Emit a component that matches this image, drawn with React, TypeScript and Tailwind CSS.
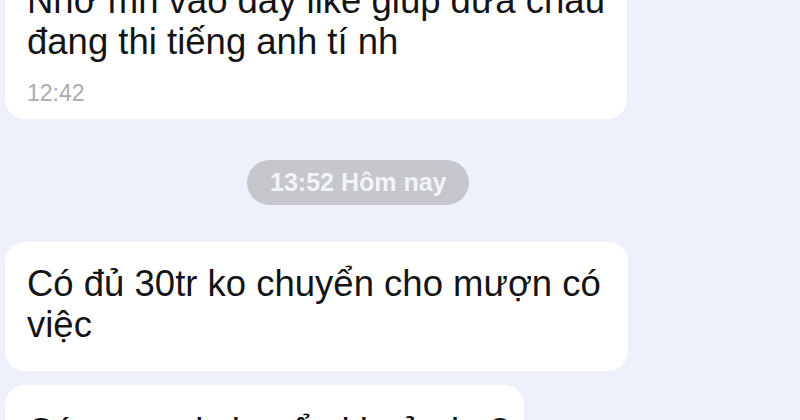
export default function App() {
  const font = { fontFamily: '"Liberation Sans", Arial, sans-serif' };

  return (
    <div
      className="w-[800px] h-[420px] overflow-hidden bg-[#eef0fb] text-[#141416]"
      style={font}
    >
      <div className="flex flex-col items-start -mt-[41px] pl-[5px]">
        {/* tin nhắn trước */}
        <div className="w-[622px] bg-white rounded-[20px] pl-[22px] pr-[6px] pt-[21px] pb-[14px]">
          <p className="text-[36.5px] leading-[41px]">
            Nhờ mn vào đây like giúp đứa cháu đang thi tiếng anh tí nh
          </p>
          <p className="mt-[19px] text-[23px] leading-[24px] text-[#a9acb4]">12:42</p>
        </div>

        {/* mốc thời gian */}
        <div className="ml-[242px] mt-[41px] h-[45px] px-[23px] rounded-full bg-[#c5c7cd] flex items-center">
          <span className="text-[25px] font-bold text-[#f3f4f7]">13:52 Hôm nay</span>
        </div>

        <div className="mt-[37px] w-[623px] bg-white rounded-[20px] pl-[22px] pr-[8px] pt-[21px] pb-[26px]">
          <p className="text-[36.5px] leading-[41px]">
            Có đủ 30tr ko chuyển cho mượn có việc
          </p>
        </div>

        <div className="mt-[14px] bg-white rounded-[20px] pl-[22px] pr-[14px] pt-[26px] pb-[25px]">
          <p className="text-[36.5px] leading-[41px]">Có em mai chuyển khoản ko?</p>
        </div>
      </div>
    </div>
  );
}
